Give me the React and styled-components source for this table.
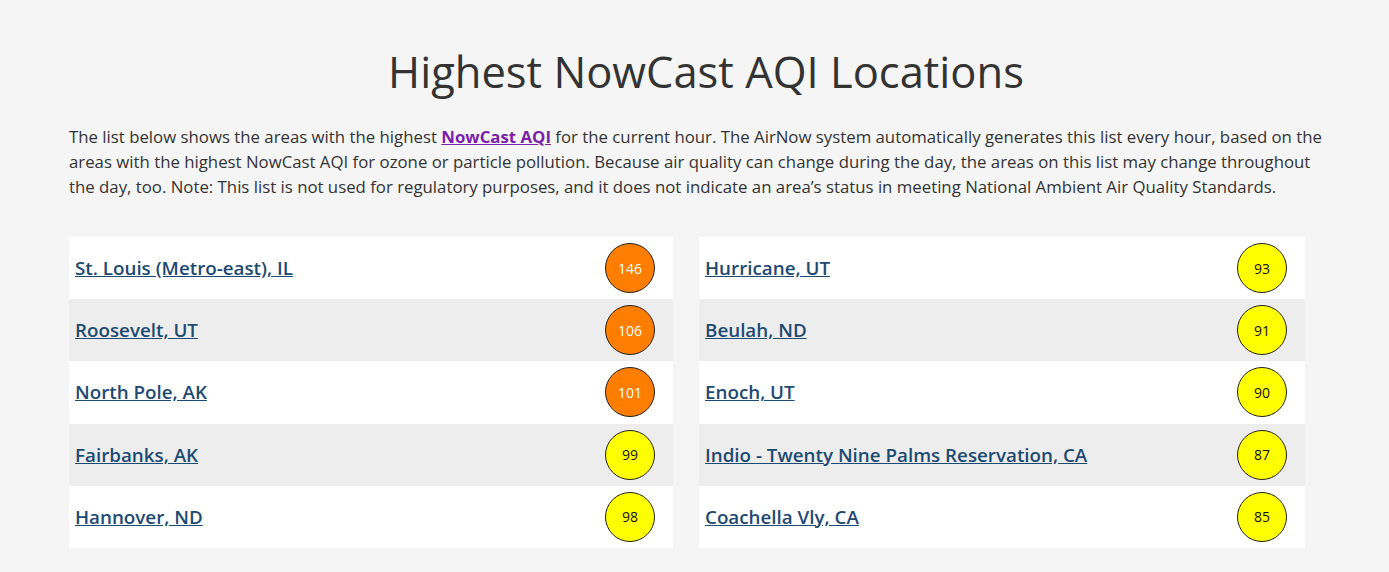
import React from 'react'
import styled, { createGlobalStyle } from 'styled-components'

const GlobalStyle = createGlobalStyle`
  body {
    margin: 0;
    background: #f5f5f5;
    font-family: "Open Sans", "Liberation Sans", sans-serif;
    color: #333;
  }
`

const left = [
  { name: 'St. Louis (Metro-east), IL', aqi: 146 },
  { name: 'Roosevelt, UT', aqi: 106 },
  { name: 'North Pole, AK', aqi: 101 },
  { name: 'Fairbanks, AK', aqi: 99 },
  { name: 'Hannover, ND', aqi: 98 },
]

const right = [
  { name: 'Hurricane, UT', aqi: 93 },
  { name: 'Beulah, ND', aqi: 91 },
  { name: 'Enoch, UT', aqi: 90 },
  { name: 'Indio - Twenty Nine Palms Reservation, CA', aqi: 87 },
  { name: 'Coachella Vly, CA', aqi: 85 },
]

const App = () => {
  return (
    <Main>
      <GlobalStyle />
      <Title>Highest NowCast AQI Locations</Title>
      <Intro>
        The list below shows the areas with the highest <a href="#nowcast">NowCast AQI</a> for the current hour. The AirNow system automatically generates this list every hour, based on the areas with the highest NowCast AQI for ozone or particle pollution. Because air quality can change during the day, the areas on this list may change throughout the day, too. Note: This list is not used for regulatory purposes, and it does not indicate an area’s status in meeting National Ambient Air Quality Standards.
      </Intro>
      <Lists>
        {[left, right].map((col, i) => (
          <Column key={i}>
            {col.map((item) => (
              <Row key={item.name}>
                <Place href="#">{item.name}</Place>
                <Dot $orange={item.aqi > 100}>{item.aqi}</Dot>
              </Row>
            ))}
          </Column>
        ))}
      </Lists>
    </Main>
  )
}

export default App

const Main = styled.main`
  padding: 40px 60px 24px 69px;
`

const Title = styled.h1`
  margin: 0 0 20px;
  padding-left: 14px;
  text-align: center;
  font-size: 43.5px;
  font-weight: 400;
  line-height: 64px;
  color: #333;
`

const Intro = styled.p`
  margin: 0 0 38px;
  font-size: 16.8px;
  line-height: 25px;
  a {
    color: #7a1fa8;
    font-weight: 700;
  }
`

const Lists = styled.div`
  display: grid;
  grid-template-columns: 604px 606px;
  column-gap: 26px;
`

const Column = styled.div`
  display: flex;
  flex-direction: column;
`

const Row = styled.div`
  display: flex;
  align-items: center;
  justify-content: space-between;
  height: 62.2px;
  padding: 0 18px 0 6px;
  background: #fff;
  &:nth-child(even) {
    background: #ededed;
  }
`

const Place = styled.a`
  color: #1d4a72;
  font-size: 18.8px;
  font-weight: 600;
  text-decoration: underline;
`

const Dot = styled.span`
  display: flex;
  align-items: center;
  justify-content: center;
  width: 48px;
  height: 48px;
  border-radius: 50%;
  border: 1px solid #222;
  background: ${(p) => (p.$orange ? '#ff7e00' : '#ffff00')};
  color: ${(p) => (p.$orange ? '#fff' : '#111')};
  font-size: 14px;
`
